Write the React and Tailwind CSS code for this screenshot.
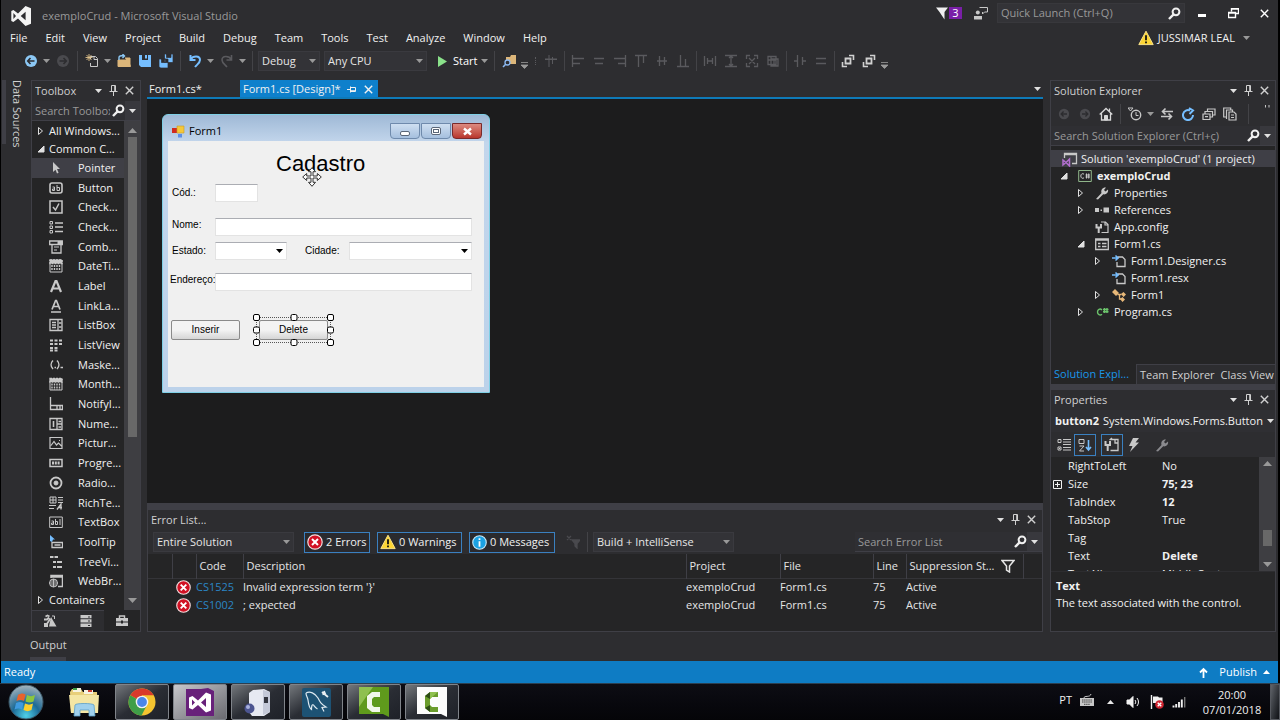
import React from 'react';

/* ---------- shared bits ---------- */

const Icon = ({ size = 14, box = 14, children, className = '' }) => (
    <svg width={size} height={size} viewBox={`0 0 ${box} ${box}`} fill="none" stroke="currentColor" className={`shrink-0 ${className}`} aria-hidden="true">
        {children}
    </svg>
);

const Caret = ({ className = 'text-[#999999]' }) => (
    <svg width="7" height="4" viewBox="0 0 7 4" className={`shrink-0 ${className}`} aria-hidden="true">
        <path d="M0 0h7L3.5 4z" fill="currentColor" />
    </svg>
);

const CaretUp = ({ className = 'text-[#999999]' }) => (
    <svg width="9" height="5" viewBox="0 0 9 5" className={`shrink-0 ${className}`} aria-hidden="true">
        <path d="M0 5h9L4.5 0z" fill="currentColor" />
    </svg>
);

const CaretDown = () => (
    <svg width="9" height="5" viewBox="0 0 9 5" className="shrink-0 text-[#999999]" aria-hidden="true">
        <path d="M0 0h9L4.5 5z" fill="currentColor" />
    </svg>
);

const PinIcon = () => (
    <Icon size={11} box={11}>
        <path d="M3.5 6V.5h4V6M6.7 1v5M1.5 6.5h8M5.5 7v4" />
    </Icon>
);

const CloseIcon = () => (
    <Icon size={9} box={9}>
        <path d="M.8.8l7.4 7.4M8.2.8L.8 8.2" strokeWidth="1.4" />
    </Icon>
);

const SearchIcon = () => (
    <Icon size={13} box={13}>
        <circle cx="8" cy="4.8" r="3.4" strokeWidth="2" />
        <path d="M5.6 7.4L1 12" strokeWidth="2.4" />
    </Icon>
);

const ErrorBadge = ({ size = 15 }) => (
    <Icon size={size} box={16}>
        <circle cx="8" cy="8" r="7.2" fill="#d11124" stroke="#f3dede" strokeWidth="1.2" />
        <path d="M5 5l6 6M11 5l-6 6" stroke="#fff" strokeWidth="2" />
    </Icon>
);

const WarningBadge = () => (
    <Icon size={16} box={16}>
        <path d="M8 1.2L15.2 14.6H.8z" fill="#fcd535" stroke="#f7e08a" strokeLinejoin="round" />
        <path d="M8 5.2v5M8 11.4v1.8" stroke="#111" strokeWidth="1.8" />
    </Icon>
);

const InfoBadge = () => (
    <Icon size={15} box={16}>
        <circle cx="8" cy="8" r="7.2" fill="#1ba1e2" stroke="#c9e8f7" strokeWidth="1.2" />
        <path d="M8 3.4v2M8 6.6v6" stroke="#fff" strokeWidth="1.9" />
    </Icon>
);

const PanelHeader = ({ title }) => (
    <div className="flex h-5 shrink-0 items-center gap-1.5 pb-px pl-[3px] pr-1.5 text-[#d0d0d0]">
        <h2 className="min-w-0 flex-1 truncate">{title}</h2>
        <button aria-label={`${title} window position`}><Caret className="text-[#e0e0e0]" /></button>
        <button aria-label={`${title} auto hide`}><PinIcon /></button>
        <button aria-label={`${title} close`}><CloseIcon /></button>
    </div>
);

const SearchBox = ({ label }) => (
    <div className="flex h-5 shrink-0 items-center border-b border-[#3f3f46] bg-[#2f2f33]">
        <input aria-label={label} placeholder={label} className="w-0 min-w-0 flex-1 bg-transparent pl-[3px] text-[#999999] outline-none placeholder:text-[#999999]" />
        <button aria-label={label} className="pl-0.5 text-[#f0f0f0]"><SearchIcon /></button>
        <button aria-label={`${label} options`} className="flex h-full items-center bg-[#38383d] px-1"><Caret className="text-[#e0e0e0]" /></button>
    </div>
);

const Combo = ({ label, value, className }) => (
    <div className={`relative flex h-5 shrink-0 items-center ${className}`}>
        <select aria-label={label} className="h-full w-full appearance-none border border-[#3a3a3f] bg-[#333337] pl-[3px] pr-3 text-[#e6e6e6] outline-none">
            <option>{value}</option>
        </select>
        <Caret className="pointer-events-none absolute right-1 text-[#999999]" />
    </div>
);

/* ---------- title, menu and toolbar ---------- */

const VsLogo = () => (
    <svg width="20" height="20" viewBox="0 0 20 20" className="mt-1.5 shrink-0" aria-hidden="true">
        <path d="M14.5 0L20 2.2v15.6L14.5 20 7 12.4 2.4 16 .3 15V5l2.1-1L7 7.6zM14.6 5.8L9.7 10l4.9 4.2zM2.4 7v6L5 10z" fill="#f4f4f4" fillRule="evenodd" />
    </svg>
);

const TitleBar = () => (
    <header className="flex h-7 items-center pb-0.5 pl-[10px] pr-[9px]">
        <VsLogo />
        <h1 className="ml-[11px] flex-1 pt-1.5 text-[#999999]">exemploCrud - Microsoft Visual Studio</h1>
        <button aria-label="Notifications" className="flex items-center text-[#f0f0f0]">
            <Icon size={13} box={13}><path d="M0 .5h12L8.5 5v7.5L3.5 5z" fill="currentColor" stroke="none" /></Icon>
            <span className="flex h-3 w-[13px] items-center justify-center bg-[#7a1fa8] text-white">3</span>
        </button>
        <button aria-label="Feedback" className="ml-3 text-[#c8c8c8]">
            <Icon>
                <path d="M5.5 1.5h8v4.5h-3l-2 2V6" />
                <circle cx="3.8" cy="6.5" r="2" fill="currentColor" stroke="none" />
                <path d="M0 10h8v3.5H0z" fill="currentColor" stroke="none" />
            </Icon>
        </button>
        <div className="ml-[9px] flex h-5 w-[188px] items-center border border-[#38383c] bg-[#333337]">
            <input aria-label="Quick Launch" placeholder="Quick Launch (Ctrl+Q)" className="w-0 flex-1 bg-transparent pl-[3px] outline-none placeholder:text-[#999999]" />
            <button aria-label="Launch" className="pr-[3px] text-[#f0f0f0]"><SearchIcon /></button>
        </div>
        <button aria-label="Minimize" className="ml-3 text-white"><Icon size={10} box={10}><path d="M1 7.5h8" strokeWidth="3" /></Icon></button>
        <button aria-label="Restore" className="ml-[21px] text-white">
            <Icon size={11} box={11}><path d="M3.5 3.5v-3h7v5h-3M.5 4.5h7v5h-7zM.5 5h7M3.5 1h7" strokeWidth="1.4" /></Icon>
        </button>
        <button aria-label="Close" className="ml-[21px] text-white"><CloseIcon /></button>
    </header>
);

const menus = ['File', 'Edit', 'View', 'Project', 'Build', 'Debug', 'Team', 'Tools', 'Test', 'Analyze', 'Window', 'Help'];

const MenuBar = () => (
    <nav className="flex h-5 items-center pl-[9px] pr-7 text-[#f1f1f1]">
        {menus.map((m) => (
            <a key={m} href={`#${m}`} className="mr-[18px]">{m}</a>
        ))}
        <button className="ml-auto flex items-center gap-1">
            <WarningBadge />
            <span className="mr-1">JUSSIMAR LEAL</span>
            <Caret />
        </button>
    </nav>
);

const Tool = ({ label, children, className = 'text-[#5a5a5e]' }) => (
    <button aria-label={label} className={`flex w-[21px] shrink-0 items-center justify-center ${className}`}>{children}</button>
);

const Drop = ({ label, children }) => (
    <button aria-label={label} className="flex w-[11px] shrink-0 items-center justify-center">{children || <Caret />}</button>
);

const Sep = ({ className = 'w-2' }) => (
    <span className={`flex h-5 shrink-0 justify-center ${className}`}><span className="h-full w-px bg-[#434347]" /></span>
);

const Overflow = () => (
    <svg width="7" height="7" viewBox="0 0 7 7" className="mt-2" aria-hidden="true">
        <path d="M0 .5h7M0 3h7L3.5 6.500z" stroke="#999" strokeWidth=".8" fill="#999" />
    </svg>
);

const layoutTools = [
    [
        ['Align lefts', 'M1.500 1v12M2 4.500h11M2 9.500h7'],
        ['Align centers', 'M2 4.500h10M3 9.500h8'],
        ['Align rights', 'M12.500 1v12M1 4.500h11M5 9.500h7'],
        ['Align tops', 'M1 1.500h12M4.500 2v11M9.500 2v7'],
        ['Align middles', 'M4.500 2v10M9.500 3v8M2 7h10'],
        ['Align bottoms', 'M1 12.500h12M4.500 1v11M9.500 5v7'],
    ],
    [
        ['Same width', 'M1.500 2v10M12.500 2v10M4.500 4v6M9.500 4v6M5 7h4'],
        ['Same height', 'M1 1.500h12M1 12.500h12M7 2v10M5 4l2-2 2 2M5 10l2 2 2-2'],
        ['Same size', 'M1.500 5V1.500H5M9 1.500h3.500V5M12.500 9v3.500H9M5 12.500H1.500V9M4 4l6 6M10 4l-6 6'],
        ['Size to grid', 'M2 2.500h8v8H2zM5 5h7v7H5zM5 2v8M2 6h8M8 5v7'],
    ],
    [
        ['Horizontal spacing', 'M4.500 1v12M9.500 3v8M1 7h3M10 7h3'],
        ['Vertical spacing', 'M2 4.500h10M2 9.500h10'],
    ],
];

const Toolbar = () => (
    <div className="flex h-[26px] items-center pl-[19px]">
        <Tool label="Navigate backward">
            <Icon><circle cx="7" cy="7" r="6" fill="#8cc8f5" stroke="none" /><path d="M10.500 7H4M6.500 4L3.700 7l2.800 3" stroke="#2d2d30" strokeWidth="1.600" /></Icon>
        </Tool>
        <Drop label="Backward history" />
        <Tool label="Navigate forward">
            <Icon><circle cx="7" cy="7" r="6" fill="#4a4a4e" stroke="none" /><path d="M3.500 7H10M7.500 4l2.800 3-2.800 3" stroke="#2d2d30" strokeWidth="1.600" /></Icon>
        </Tool>
        <Sep />
        <Tool label="New project" className="text-[#c8c8c8]">
            <Icon><path d="M5.500 5V2.500h5l2 2v8h-7V9M9 2.500v3h3.500" /><path d="M4 0v7M.5 3.500h7M1.500 1l5 5M6.500 1l-5 5" stroke="#e0c28a" strokeWidth=".9" /></Icon>
        </Tool>
        <Drop label="New options" />
        <Tool label="Open file">
            <Icon><path d="M1 6h10l2.500 6.500H1zM8 4h5v8" fill="#dcb67a" stroke="#dcb67a" /><path d="M2 6V3.500C2 2 3.500 1.500 7 2M5.500 0L7.500 2 5.500 4" stroke="#8cc8f5" strokeWidth="1.400" /></Icon>
        </Tool>
        <Tool label="Save"><Icon><path d="M1 1h12v12H3L1 11zM4 1v5h6V1zM7 1h2v3.500H7z" fill="#75beff" fillRule="evenodd" stroke="none" /></Icon></Tool>
        <Tool label="Save all">
            <Icon><path d="M5.500 0H14v8.500H5.500zM7.500 0v3.500H12V0zM0 5h9v9H1.500L0 12.500zM2.500 5v3.500h4V5z" fill="#75beff" fillRule="evenodd" stroke="#2d2d30" strokeWidth=".7" /></Icon>
        </Tool>
        <Sep />
        <Tool label="Undo" className="text-[#75beff]"><Icon><path d="M2.500 1v5h5M2.700 5.500C5 1.500 12 1.500 12 6c0 3-3 4.500-5 7" strokeWidth="2" /></Icon></Tool>
        <Drop label="Undo history" />
        <Tool label="Redo"><Icon><path d="M11.500 1v5h-5M11.300 5.500C9 1.500 2 1.500 2 6c0 3 3 4.500 5 7" strokeWidth="1.600" /></Icon></Tool>
        <Drop label="Redo history" />
        <Sep />
        <Combo label="Solution configuration" value="Debug" className="ml-0.5 w-[62px]" />
        <Combo label="Solution platform" value="Any CPU" className="ml-1 w-[103px]" />
        <button className="ml-[11px] flex w-[41px] items-center gap-1.5 text-white">
            <svg width="9" height="11" viewBox="0 0 9 11" className="shrink-0" aria-hidden="true"><path d="M0 0l9 5.500L0 11z" fill="#8ae28a" /></svg>
            <span>Start</span>
        </button>
        <Drop label="Start options" />
        <Sep />
        <Tool label="Find in files">
            <Icon><path d="M4 3h4l1-2h5v9H4z" fill="#dcb67a" stroke="none" /><circle cx="5.500" cy="8.500" r="2.500" stroke="#8cb8f0" strokeWidth="1.300" fill="#2d2d30" /><path d="M3.700 10.300L1 13" stroke="#8cb8f0" strokeWidth="1.600" /></Icon>
        </Tool>
        <Drop label="Toolbar options"><Overflow /></Drop>
        <span className="mr-1 h-2 w-1.5 border-r border-dotted border-[#5a5a5e]" />
        <Tool label="Align to grid"><Icon><path d="M5 1v12M1 5h12M1 5.500h12M8.500 3v7" /></Icon></Tool>
        {layoutTools.map((group, i) => (
            <React.Fragment key={i}>
                <Sep className="w-1.5" />
                {group.map(([label, d]) => (
                    <Tool key={label} label={label}><Icon><path d={d} strokeWidth="1.300" /></Icon></Tool>
                ))}
            </React.Fragment>
        ))}
        <Sep className="w-1.5" />
        {['Bring to front', 'Send to back'].map((label) => (
            <Tool key={label} label={label} className="text-[#d0d0d0]">
                <Icon><path d="M4.500 4.500h5v5h-5z" strokeWidth="1.800" /><path d="M8 1.500h4.500V6M6 12.500H1.500V8" strokeWidth="1.600" /></Icon>
            </Tool>
        ))}
        <Drop label="Layout toolbar options"><Overflow /></Drop>
    </div>
);

/* ---------- toolbox ---------- */

const Arrow = ({ open }) => (
    <Icon size={8} box={8} className="text-[#e0e0e0]">
        {open ? <path d="M7 1v6H1z" fill="currentColor" /> : <path d="M1.500 .5v7L5.500 4z" />}
    </Icon>
);

const toolboxItems = [
    ['Pointer', <path d="M4 1v10l2.500-2.300L8 12.500l1.600-.8L8 8h3z" fill="currentColor" stroke="none" />],
    ['Button', <><rect x="1" y="2" width="12" height="10" rx="2" strokeWidth="1.600" /><path d="M3.500 6h2v3.500h-2V8h2M8 4v5.500h2.500V6.500H8" /></>],
    ['Check...', <><rect x="1" y="1" width="12" height="12" strokeWidth="1.500" /><path d="M4 7l2.500 3L10 3.500" strokeWidth="1.500" /></>],
    ['Check...', <><path d="M1 1.500h2.500V4H1zM1 6h2.500v2.500H1zM1 10.500h2.500V13H1z" /><path d="M6 3h8M6 7h8M6 11.500h8" strokeWidth="1.500" /></>],
    ['Comb...', <><path d="M.7 1h12.600v3.500H.7zM3 4.500V13h9V4.500" strokeWidth="1.300" /><path d="M9 1.500h4v3H9zM5 7h5M5 10h3" fill="currentColor" /></>],
    ['DateTi...', <><path d="M1 1h12v12H1z" /><path d="M1 1h12v3.500H1zM3 6v6M5.500 6v6M8 6v6M10.500 6v6" fill="currentColor" strokeDasharray="2 1" strokeWidth="1.400" /></>],
    ['Label', <path d="M2 13L6.500 2h1L12 13M4 9.500h6" strokeWidth="2.200" />],
    ['LinkLa...', <path d="M3 10.500L6.600 1.500h.8L11 10.500M4.500 7.500h5M2 13h10" strokeWidth="1.700" />],
    ['ListBox', <><path d="M1 1.500h12v11H1zM9 2v10" strokeWidth="1.300" /><path d="M3 4.500h4M3 7h4M3 9.500h4M10 5h2.500M10 9h2.500" strokeWidth="1.300" /></>],
    ['ListView', <path d="M1 2.500h12M1 6h12M1 10h8M1 12.500h8" strokeWidth="2" strokeDasharray="3 1.500" />],
    ['Maske...', <path d="M4 2.500C1.500 5 1.500 8.500 4 11M8 2.500c2.500 2.500 2.500 6 0 8.500M5.500 9.500h1.500M11.500 9.500H14" strokeWidth="1.500" />],
    ['Month...', <><path d="M1 2h12v11H1z" /><path d="M1 1.500h12V5H1zM3 6.500V13M5.500 6.500V13M8 6.500V13M10.500 6.500V13" fill="currentColor" strokeDasharray="2 1" strokeWidth="1.400" /></>],
    ['NotifyI...', <path d="M1.500 0v12.500h12V8.500h-12M8 8.500v4M11 8.500v4" strokeWidth="1.300" />],
    ['Nume...', <><path d="M1 1.500h12v11H1zM8 2v10M8 7h5" strokeWidth="1.300" /><path d="M4.500 4v6M9.500 4.500h2.500M9.500 10h2.500" strokeWidth="1.600" /></>],
    ['Pictur...', <path d="M1 1.500h12v11H1zM2 9.500l3-4 2.500 3.500 2-2 3 3M10 4.500h1" strokeWidth="1.200" />],
    ['Progre...', <><path d="M1 3.500h12v7H1z" strokeWidth="1.500" /><path d="M3 7h8" strokeWidth="3" strokeDasharray="2 .8" /></>],
    ['Radio...', <><circle cx="7" cy="7" r="5.500" strokeWidth="1.800" /><circle cx="7" cy="7" r="2" fill="currentColor" /></>],
    ['RichTe...', <><path d="M1 1h6v6H1zM4 1v6M1 4h6M9 1.500h5M9 4h5M9 6.500h5M0 9.500h7M0 12.500h5" /><path d="M8 13.500l4-5.500v5.500M10 11.500h3" strokeWidth="1.300" /></>],
    ['TextBox', <><path d="M.7 2h12.600v10.500H.7z" /><path d="M2.500 6h2v3.500h-2V8h2M6.500 4v5.500h2V6.500h-2M11 4v6" /></>],
    ['ToolTip', <><path d="M3 7.500h10.500v5H3zM5.500 10h6" strokeWidth="1.300" /><path d="M1 0l5 4.500H4L3 7 1 6z" fill="#75beff" stroke="none" /></>],
    ['TreeVi...', <path d="M1 2h3.500M5.500 2H9M4 7h3M8 7h5M4 12h3M8 12h5" strokeWidth="2" />],
    ['WebBr...', <><path d="M2 4V1.500h11.500v11H9M2 3h11.500" strokeWidth="1.500" /><circle cx="4.500" cy="9" r="4" /><path d="M.5 9h8M4.500 5v8M1.500 7h6M1.500 11h6" strokeWidth=".9" /></>],
];

const Toolbox = () => (
    <aside className="flex w-[110px] shrink-0 flex-col border border-[#3f3f46]">
        <PanelHeader title="Toolbox" />
        <SearchBox label="Search Toolbox" />
        <div className="flex min-h-0 flex-1 bg-[#252526] text-[#f1f1f1]">
            <div className="flex min-w-0 flex-1 flex-col whitespace-nowrap pb-px pt-px">
                <button className="flex h-[18px] items-center gap-1 pl-[5px]"><Arrow />All Windows...</button>
                <button className="flex h-[18px] items-center gap-1 pl-[5px]"><Arrow open />Common C...</button>
                <ul className="flex min-h-0 flex-1 flex-col">
                    {toolboxItems.map(([label, art], i) => (
                        <li key={i} className={`flex min-h-0 flex-1 items-center pl-[17px] ${i === 0 ? 'bg-[#3f3f46]' : ''}`}>
                            <Icon className="mr-2 text-[#c8c8c8]">{art}</Icon>
                            <span className="pl-[7px] leading-4">{label}</span>
                        </li>
                    ))}
                </ul>
                <button className="flex h-[18px] items-center gap-1 pl-[5px]"><Arrow />Containers</button>
            </div>
            <div className="flex w-4 shrink-0 flex-col items-center bg-[#3e3e42] py-[7px]">
                <CaretUp />
                <div className="mt-1 w-[9px] flex-[13] bg-[#686868]" />
                <div className="flex-[7]" />
                <CaretDown />
            </div>
        </div>
        <div className="flex h-[21px] shrink-0 text-[#c8c8c8]">
            <button aria-label="Server Explorer" className="flex flex-1 items-center justify-center border-t border-[#3f3f46]">
                <Icon><path d="M2.500 2.500l2-1 2 1M1 5.500h3l2-2M3.500 10.500l4-6" strokeWidth="1.800" /><path d="M8 3l5.500 9.500H6zM1 9h4v4H1z" fill="currentColor" stroke="none" /><path d="M9 2h2.500v3" /></Icon>
            </button>
            <button aria-label="Data Sources" className="flex flex-1 items-center justify-center border-t border-[#3f3f46]">
                <Icon><path d="M1.500 1h11v3.300h-11zM1.500 5.300h11v3.300h-11zM1.500 9.600h11V13h-11z" fill="currentColor" stroke="none" /><path d="M9 3h2M9 7h2M9 11.500h2" stroke="#2d2d30" /></Icon>
            </button>
            <button aria-label="Toolbox tab" className="flex flex-1 items-center justify-center bg-[#252526]">
                <Icon><path d="M1 4h12v3.500H1zM1 8.500h12V12H1z" fill="currentColor" stroke="none" /><path d="M4.500 4V2h5v2" strokeWidth="1.400" /><path d="M7 6.500v3" stroke="#252526" strokeWidth="2" /></Icon>
            </button>
        </div>
    </aside>
);

/* ---------- form designer ---------- */

const field = 'h-[18px] border border-[#e3e3e3] border-t-[#abadb3] bg-white outline-none';
const winButton = 'h-5 w-[69px] rounded-xs border border-[#8a8a8a] bg-linear-to-b from-[#f3f3f3] from-50% to-[#d5d5d5] to-100% text-center';

const FormCombo = ({ id, className }) => (
    <div className={`relative flex items-center ${className}`}>
        <select id={id} className={`w-full appearance-none ${field}`} />
        <Caret className="pointer-events-none absolute right-1 text-black" />
    </div>
);

const handles = [
    '-left-1 -top-1', 'left-1/2 -top-1 -translate-x-1/2', '-right-1 -top-1',
    '-left-1 top-1/2 -translate-y-1/2', '-right-1 top-1/2 -translate-y-1/2',
    '-bottom-1 -left-1', '-bottom-1 left-1/2 -translate-x-1/2', '-bottom-1 -right-1',
];

const FormWindow = () => (
    <div className="w-[328px] rounded-t-md border border-[#7fd0e6] bg-linear-to-b from-[#9fb9d6] via-[#c3d6ec] via-10% to-[#bcd2ea] px-[5px] pb-[5px] text-black">
        <div className="flex h-[26px] items-center pl-1 pr-0.5 pt-1.5">
            <Icon size={13} box={13}>
                <path d="M0 3h5v5H0z" fill="#d02b20" stroke="none" />
                <path d="M5 1h7v7H5z" fill="#f5c83a" stroke="#c99b22" strokeWidth=".6" />
                <path d="M6 9h4v3.500H6z" fill="#5b8fe8" stroke="none" />
            </Icon>
            <span className="ml-1 flex-1">Form1</span>
            <button aria-label="Form minimize" className="flex h-4 w-[30px] items-center justify-center rounded-b-sm border border-[#6f8aac] bg-linear-to-b from-[#cfdff1] to-[#a5bfde]">
                <span className="mt-1 h-[5px] w-[10px] rounded-xs border border-[#5a6678] bg-white" />
            </button>
            <button aria-label="Form maximize" className="ml-px flex h-4 w-[30px] items-center justify-center rounded-b-sm border border-[#6f8aac] bg-linear-to-b from-[#cfdff1] to-[#a5bfde]">
                <span className="flex h-2 w-[10px] items-center justify-center rounded-xs border border-[#5a6678] bg-white"><span className="h-1 w-1.5 border border-[#5a6678]" /></span>
            </button>
            <button aria-label="Form close" className="ml-px flex h-4 w-[30px] items-center justify-center rounded-b-sm border border-[#7a2a2a] bg-linear-to-b from-[#dc8a80] to-[#b8342c]">
                <Icon size={9} box={9}><path d="M1 1.500l7 6M8 1.500l-7 6" stroke="#fff" strokeWidth="2.400" /></Icon>
            </button>
        </div>
        <form className="min-h-[246px] bg-[#f0f0f0] font-['Liberation_Sans',Arial,sans-serif] text-[10px] leading-[14px]">
            <div className="relative w-fit pl-[108px] pt-2">
                <h3 className="text-[22px] leading-[30px]">Cadastro</h3>
                <svg width="20" height="20" viewBox="0 0 20 20" className="absolute -bottom-2 left-[134px]" aria-hidden="true">
                    <path d="M10 .7l3.500 4H11v4.300h4.300V6.500l4 3.500-4 3.500V11H11v4.300h2.500l-3.500 4-3.500-4H9V11H4.700v2.500L.7 10l4-3.500V9H9V4.700H6.500z" fill="#fff" stroke="#333" />
                </svg>
            </div>
            <div className="mt-[5px] flex items-center">
                <label htmlFor="cod" className="w-[47px] pl-1">Cód.:</label>
                <input id="cod" className={`w-[43px] ${field}`} />
            </div>
            <div className="mr-3 mt-4 flex items-start">
                <label htmlFor="nome" className="w-[47px] pl-1">Nome:</label>
                <input id="nome" className={`min-w-0 flex-1 ${field}`} />
            </div>
            <div className="mr-3 mt-1.5 flex items-center">
                <label htmlFor="estado" className="w-[47px] pl-1">Estado:</label>
                <FormCombo id="estado" className="w-[72px]" />
                <label htmlFor="cidade" className="ml-[18px] w-11">Cidade:</label>
                <FormCombo id="cidade" className="min-w-0 flex-1" />
            </div>
            <div className="mr-3 mt-[13px] flex items-start">
                <label htmlFor="endereco" className="w-[47px] pl-0.5">Endereço:</label>
                <input id="endereco" className={`min-w-0 flex-1 ${field}`} />
            </div>
            <div className="mt-[29px] flex gap-[19px] pl-[3px]">
                <button type="button" className={winButton}>Inserir</button>
                <div className="relative">
                    <button type="button" className={`block ${winButton}`}>Delete</button>
                    <div className="pointer-events-none absolute -inset-[3px] border border-dotted border-[#555555]">
                        {handles.map((pos) => (
                            <span key={pos} className={`absolute size-[7px] rounded-xs border border-black bg-white ${pos}`} />
                        ))}
                    </div>
                </div>
            </div>
        </form>
    </div>
);

const Editor = () => (
    <section className="flex min-h-0 flex-1 flex-col">
        <div className="flex h-[19px] shrink-0 items-stretch border-b-2 border-[#0e7ab8] text-[#f1f1f1]">
            <a href="#form1" className="flex w-[93px] items-center pl-0.5 pt-px">Form1.cs*</a>
            <div className="flex w-[138px] items-center bg-[#0e80cc] pl-[3px] pr-[5px] pt-px">
                <a href="#design" className="flex-1 whitespace-nowrap">Form1.cs [Design]*</a>
                <button aria-label="Keep open" className="mr-2"><Icon size={9} box={9}><path d="M0 4.500h3M3.500 1.500v6M4 2.500h4.500v4H4M4 5.700h4" /></Icon></button>
                <button aria-label="Close document"><CloseIcon /></button>
            </div>
            <button aria-label="Active files" className="ml-auto mr-0.5"><Caret className="text-[#e0e0e0]" /></button>
        </div>
        <div className="flex-1 bg-[#1c1c1d] pl-[15px] pt-[15px]">
            <FormWindow />
        </div>
    </section>
);

/* ---------- error list ---------- */

const errors = [
    { code: 'CS1525', text: "Invalid expression term '}'", project: 'exemploCrud', file: 'Form1.cs', line: 75, state: 'Active' },
    { code: 'CS1002', text: '; expected', project: 'exemploCrud', file: 'Form1.cs', line: 75, state: 'Active' },
];

const filterButton = 'flex h-[21px] items-center gap-[3px] whitespace-nowrap border border-[#3a80c0] bg-[#2a2a2e] pl-0.5 text-[#f1f1f1]';
const th = 'border-l border-[#3f3f46] pl-[3px] text-left font-normal';

const ErrorList = () => (
    <section className="flex h-[122px] shrink-0 flex-col border border-t-0 border-[#3f3f46]">
        <PanelHeader title="Error List..." />
        <div className="flex h-6 shrink-0 items-center">
            <Combo label="Error scope" value="Entire Solution" className="ml-[5px] w-[141px]" />
            <button className={`ml-2.5 w-[66px] ${filterButton}`}><ErrorBadge size={16} />2 Errors</button>
            <button className={`ml-[7px] w-[85px] ${filterButton}`}><WarningBadge />0 Warnings</button>
            <button className={`ml-[7px] w-[86px] ${filterButton}`}><InfoBadge />0 Messages</button>
            <Tool label="Clear filters" className="ml-[7px] text-[#4a4a4e]"><Icon><path d="M6 5h8l-3 3.500V13L9 11V8.500zM1 1l4 4M5 1L1 5" fill="currentColor" strokeWidth="1.300" /></Icon></Tool>
            <Sep />
            <Combo label="Error source" value="Build + IntelliSense" className="ml-0.5 w-[141px]" />
            <div className="ml-auto w-[187px]"><SearchBox label="Search Error List" /></div>
        </div>
        <div className="flex-1 bg-[#252526]">
            <table className="w-full table-fixed text-[#e6e6e6]">
                <colgroup>
                    <col className="w-[24px]" /><col className="w-6" /><col className="w-[47px]" /><col />
                    <col className="w-[94px]" /><col className="w-[93px]" /><col className="w-[33px]" /><col className="w-[117px]" /><col className="w-[19px]" />
                </colgroup>
                <thead>
                    <tr className="h-6 border-b border-[#343438]">
                        <td />
                        <td className="border-l border-[#3f3f46]" />
                        <th className={th}>Code</th>
                        <th className={th}>Description</th>
                        <th className={th}>Project</th>
                        <th className={th}>File</th>
                        <th className={th}>Line</th>
                        <th className={th}>
                            <span className="flex items-center justify-between pr-2">
                                Suppression St...
                                <Icon><path d="M1 1.500h12L8.500 7v6l-3-2V7z" strokeWidth="1.500" /></Icon>
                            </span>
                        </th>
                        <td className="border-l border-[#3f3f46]" />
                    </tr>
                </thead>
                <tbody>
                    {errors.map((e) => (
                        <tr key={e.code} className="h-[18px]">
                            <td />
                            <td className="pl-1"><ErrorBadge /></td>
                            <td><a href={`#${e.code}`} className="text-[#2b86c5]">{e.code}</a></td>
                            <td>{e.text}</td>
                            <td>{e.project}</td>
                            <td>{e.file}</td>
                            <td>{e.line}</td>
                            <td>{e.state}</td>
                            <td />
                        </tr>
                    ))}
                </tbody>
            </table>
        </div>
    </section>
);

/* ---------- solution explorer ---------- */

const csFile = (
    <>
        <path d="M6 4.500V3h4.500L13 5.500v7H5V8" strokeWidth="1.300" />
        <path d="M0 4h6M3.500 1.500L6 4 3.500 6.500" stroke="#75beff" strokeWidth="1.500" />
    </>
);

const tree = [
    { text: 'exemploCrud', pad: 'pl-[9px]', open: true, bold: true, art: <><path d="M.7 1.500h12.600v11H.7z" stroke="#8fb58a" /><path d="M6 5.200C4.500 4 2.800 5 2.800 7S4.500 10 6 8.800M8.500 4.500v5M10.700 4.500v5M7.500 6h4.500M7.500 8h4.500" /></> },
    { text: 'Properties', pad: 'pl-[26px]', open: false, art: <path d="M1 13l5.500-6C5.500 3.500 8 1 11 1.500L9 4l1.500 1.500L13 3.500c.7 3-2 5.500-4.800 4.800L3 13.500z" fill="currentColor" stroke="none" /> },
    { text: 'References', pad: 'pl-[26px]', open: false, art: <path d="M0 5h4v4H0zM5.500 6.500h1.500v1.500H5.500zM8.500 4.500H14v5H8.500z" fill="currentColor" stroke="none" /> },
    { text: 'App.config', pad: 'pl-[26px]', art: <><path d="M6 2h4.500L13 4.500v8H6.500M10 2v3h3" strokeWidth="1.200" /><path d="M1.500 4v3.500h4.500V4M3.700 7v6" strokeWidth="2" /></> },
    { text: 'Form1.cs', pad: 'pl-[26px]', open: true, art: <><path d="M.7 2h12.600v10.500H.7zM1 3h12" strokeWidth="1.300" /><path d="M3 6.500h2.500M7 6.500h4.500M3 9.500h2.500M7 9.500h4.500" strokeWidth="1.500" /></> },
    { text: 'Form1.Designer.cs', pad: 'pl-[43px]', open: false, art: csFile },
    { text: 'Form1.resx', pad: 'pl-[43px]', art: csFile },
    { text: 'Form1', pad: 'pl-[43px]', open: false, art: <><path d="M0 4l3-3 4 4-3 3zM9 6l2.500-2L14 6.500 11.500 9zM8 11l2.500-2 2.500 2.500L10.500 14z" fill="#e8b878" stroke="none" /><path d="M5.500 6.500h4M7.500 6.500V11H9" stroke="#e8b878" strokeWidth="1.300" /></> },
    { text: 'Program.cs', pad: 'pl-[26px]', open: false, art: <path d="M7 5C5 3 2.500 4.500 2.500 7S5 11 7 9.200M9.500 3v5M12 3v5M8 4.500h5.500M8 6.700h5.500" stroke="#6cc46c" strokeWidth="1.400" /> },
];

const SolutionExplorer = () => (
    <section className="flex min-h-0 flex-1 flex-col border border-b-0 border-[#3f3f46]">
        <PanelHeader title="Solution Explorer" />
        <div className="flex h-[25px] shrink-0 items-center pl-0.5 text-[#c8c8c8]">
            <Tool label="Back"><Icon size={12}><circle cx="7" cy="7" r="6" fill="#4a4a4e" stroke="none" /><path d="M10.500 7H4M6.500 4L3.700 7l2.800 3" stroke="#2d2d30" strokeWidth="1.600" /></Icon></Tool>
            <Tool label="Forward"><Icon size={12}><circle cx="7" cy="7" r="6" fill="#4a4a4e" stroke="none" /><path d="M3.500 7H10M7.500 4l2.800 3-2.800 3" stroke="#2d2d30" strokeWidth="1.600" /></Icon></Tool>
            <Tool label="Home" className="text-[#d8d8d8]"><Icon><path d="M.7 7.500L7 1.500l6.300 6M2.500 6.500v6.500h9V6.500M10.500 4V1.500" strokeWidth="1.300" /><path d="M5.500 8.500h3V13h-3z" fill="currentColor" /></Icon></Tool>
            <Sep />
            <Tool label="Pending changes filter" className="text-[#c8c8c8]"><Icon><circle cx="8" cy="8" r="4.700" strokeWidth="1.400" /><path d="M8 5v3.500h2.500M0 1h5L2.500 4z" /></Icon></Tool>
            <Drop label="Filter options" />
            <Tool label="Sync with active document" className="text-[#c8c8c8]"><Icon><path d="M13 4.500H2.500M5.500 1.500l-3 3 3 3M1 9.500h10.500M8.500 6.500l3 3-3 3" strokeWidth="1.600" /></Icon></Tool>
            <Tool label="Refresh" className="text-[#75beff]"><Icon><path d="M9 3.500A5 5 0 1 0 12 8M8 1l4 2.500L8.500 7" strokeWidth="2" /></Icon></Tool>
            <Tool label="Collapse all" className="text-[#c8c8c8]"><Icon><path d="M1 7h7v5.500H1zM3 7V4.500h7.500V10H8M5.500 4.500V2H13v6h-2.500M3 9.700h3" strokeWidth="1.200" /></Icon></Tool>
            <Tool label="Show all files" className="text-[#c8c8c8]"><Icon><path d="M3 10H.7V1h7v1.500M3.500 12V3h6v1.500M6 5h5l2 2v6H6zM8 8h3M8 10.500h3" strokeWidth="1.200" /></Icon></Tool>
            <Sep className="ml-1 w-2" />
            <Icon size={7} box={7} className="mb-3 ml-auto mr-1"><path d="M1.500 1v2.500M5 1v2.500" /></Icon>
        </div>
        <SearchBox label="Search Solution Explorer (Ctrl+ç)" />
        <ul className="min-h-0 flex-1 bg-[#252526] pt-1 text-[#f1f1f1]">
            <li className="flex h-[17px] items-center gap-[3px] bg-[#3f3f46] pl-[11px]">
                <Icon size={16} box={16}>
                    <path d="M2.500 7V2.500h12v10H10M2.500 3.500h12" stroke="#c8c8c8" strokeWidth="1.300" />
                    <path d="M1 9v5l3-2.500L7.500 15V8L4 11.500z" stroke="#b36fd0" strokeWidth="1.500" />
                </Icon>
                Solution 'exemploCrud' (1 project)
            </li>
            {tree.map((n) => (
                <li key={n.text} className={`flex h-[17px] items-center ${n.pad} ${n.bold ? 'font-bold' : ''}`}>
                    <span className="flex w-[18px]">{n.open !== undefined && <Arrow open={n.open} />}</span>
                    <Icon className="mr-[5px] text-[#c8c8c8]">{n.art}</Icon>
                    {n.text}
                </li>
            ))}
        </ul>
        <div className="flex h-5 shrink-0 items-stretch whitespace-nowrap">
            <a href="#solution" className="flex w-[85px] items-center bg-[#252526] pl-[3px] text-[#1a97ea]">Solution Expl...</a>
            <a href="#team" className="flex items-center border-l border-t border-[#3f3f46] px-[3px] text-[#d0d0d0]">Team Explorer</a>
            <a href="#class" className="flex flex-1 items-center border-t border-[#3f3f46] pl-[3px] text-[#d0d0d0]">Class View</a>
        </div>
    </section>
);

/* ---------- properties ---------- */

const props = [
    ['RightToLeft', 'No'],
    ['Size', '75; 23', true],
    ['TabIndex', '12', true],
    ['TabStop', 'True'],
    ['Tag', ''],
    ['Text', 'Delete', true],
    ['TextAlign', 'MiddleCenter'],
];

const pressed = 'flex size-[22px] items-center justify-center border border-[#3a80c0]';

const Properties = () => (
    <section className="flex h-[242px] shrink-0 flex-col border border-t-0 border-[#3f3f46]">
        <PanelHeader title="Properties" />
        <button className="flex h-[22px] shrink-0 items-center gap-1 whitespace-nowrap bg-[#2f2f33] pl-1 pr-0.5 text-[#f1f1f1]">
            <b>button2</b>
            <span className="flex-1 text-left">System.Windows.Forms.Button</span>
            <Caret className="text-[#e0e0e0]" />
        </button>
        <div className="flex h-[25px] shrink-0 items-center pl-0.5 text-[#c8c8c8]">
            <Tool label="Categorized" className="text-[#c8c8c8]"><Icon><path d="M1 1.500h3v3H1zM1 9h3v3H1zM2.500 10v1M6 1.500h8M6 4h8M6 6.500h8M6 9.500h8M6 12h8" /></Icon></Tool>
            <button aria-label="Alphabetical" className={pressed}>
                <Icon><path d="M1 1.500h5v4H1zM1.500 8h4.500l-4.500 5H6" /><path d="M10.500 2v10M8 9l2.500 3L13 9" stroke="#75beff" strokeWidth="1.600" /></Icon>
            </button>
            <button aria-label="Properties page" className={`ml-[5px] ${pressed}`}>
                <Icon size={16} box={16}><path d="M6 2.500h8v11H6.500M11 2.500v3.500h3.500M8 1L5.500 3" strokeWidth="1.300" /><path d="M1.500 4v4h4.500V4M3.700 8v6" strokeWidth="2" /></Icon>
            </button>
            <Tool label="Events" className="text-[#c8c8c8]"><Icon><path d="M6 0h6L8.500 4.500H12L3 14l2.500-6H2z" fill="currentColor" stroke="none" /></Icon></Tool>
            <Tool label="Property pages" className="ml-[7px] text-[#8a8a8e]"><Icon><path d="M1 13l5.500-6C5.500 3.500 8 1 11 1.500L9 4l1.500 1.500L13 3.500c.7 3-2 5.500-4.800 4.800L3 13.500z" fill="currentColor" stroke="none" /></Icon></Tool>
        </div>
        <div className="flex h-[114px] shrink-0 bg-[#252526] text-[#f1f1f1]">
            <div className="min-w-0 flex-1 overflow-hidden">
                <table className="w-full table-fixed">
                    <colgroup><col className="w-[17px]" /><col className="w-[94px]" /><col /></colgroup>
                    <tbody>
                        {props.map(([name, value, bold]) => (
                            <tr key={name} className="h-[18px]">
                                <td className="pl-0.5">{name === 'Size' && <Icon size={9} box={9}><path d="M.5.500h8v8h-8zM2 4.500h5M4.500 2v5" /></Icon>}</td>
                                <td>{name}</td>
                                <td className={bold ? 'font-bold' : ''}>{value}</td>
                            </tr>
                        ))}
                    </tbody>
                </table>
            </div>
            <div className="flex w-4 shrink-0 flex-col items-center bg-[#3e3e42] py-1">
                <CaretUp />
                <div className="flex-1" />
                <div className="mb-4 h-4 w-[9px] bg-[#686868]" />
                <CaretDown />
            </div>
        </div>
        <div className="flex-1 border-t border-[#2d2d30] bg-[#252526] pl-[5px] pt-[5px] leading-[17px] text-[#f1f1f1]">
            <b className="block">Text</b>
            <p>The text associated with the control.</p>
        </div>
    </section>
);

/* ---------- windows taskbar ---------- */

const apps = [
    ['Google Chrome', (
        <svg width="28" height="28" viewBox="0 0 28 28" aria-hidden="true">
            <circle cx="14" cy="14" r="13.500" fill="#f4c430" />
            <path d="M14 14L2.300 7.200A13.500 13.500 0 0 1 25.700 7.200H14z" fill="#d9392b" />
            <path d="M14 14L2.300 7.200A13.500 13.500 0 0 0 13.500 27.500L19 17z" fill="#3f9e48" />
            <circle cx="14" cy="14" r="6.300" fill="#f3f3f3" />
            <circle cx="14" cy="14" r="4.900" fill="#4a86e8" />
        </svg>
    )],
    ['Visual Studio', (
        <svg width="28" height="28" viewBox="0 0 28 28" aria-hidden="true">
            <path d="M0 1h15l7-1 6 3v25H0z" fill="#68217a" />
            <path d="M20 4.500l5 2v16l-5 2-8-7.500-5.500 4.500L3 20V9.500L6.500 8l5.500 4.500zM20 10l-5 4.500 5 4.500zM6 11.500v6L9 14.500z" fill="#fff" fillRule="evenodd" />
        </svg>
    )],
    ['SQL Server', (
        <svg width="28" height="28" viewBox="0 0 28 28" aria-hidden="true">
            <path d="M5 5l4-3 11-1 6 3v20l-6 4H8l-3-4z" fill="#e6e9f2" />
            <path d="M19 2l7 2v20l-7 3z" fill="#c4c9d8" />
            <path d="M20 9h4v6h-4z" fill="#33363f" />
            <circle cx="5.500" cy="20.500" r="5" fill="#4c5590" /><circle cx="4" cy="19" r="2" fill="#a8b0dc" />
        </svg>
    )],
    ['MySQL Workbench', (
        <svg width="29" height="29" viewBox="0 0 29 29" aria-hidden="true">
            <rect width="29" height="29" rx="2" fill="#1d5274" />
            <path d="M4 5c4-2 9 0 12 5 2 4 3 6 8 9l-4 .5 2 4M4 5c0 3 1.500 4 2 7 .5 4 1 8 3.500 9.500C9.500 18 10 16 11.500 17c1.500 2 2 3 4 4" fill="none" stroke="#dce8f0" strokeWidth="1.200" />
            <path d="M20 4l6 5M22 3l1 2.500-2.500 1" fill="none" stroke="#e8eef2" strokeWidth="1.800" />
        </svg>
    )],
    ['Camtasia', (
        <svg width="30" height="30" viewBox="0 0 30 30" aria-hidden="true">
            <path d="M0 0h30v30l-6-3H0z" fill="#5f9a1c" /><path d="M0 0h14L0 20z" fill="#8fc050" />
            <path d="M21 5v5h-6l-2 2v6l2 2h6v5h-8l-5-4V9l5-4z" fill="#f2f7ea" />
        </svg>
    )],
    ['Camtasia Recorder', (
        <svg width="30" height="30" viewBox="0 0 30 30" aria-hidden="true">
            <path d="M0 0h30v30l-6-3H0z" fill="#fcfcfc" />
            <path d="M21 5v5h-6l-2 2v6l2 2h6v5h-8l-5-4V9l5-4z" fill="#6a9c2c" />
            <path d="M13 5v7l-5-3zM13 18v7l-5-4z" fill="#2c4c14" /><path d="M13 5h8l-6 5-2 2z" fill="#8fc050" />
        </svg>
    )],
];

const Taskbar = () => (
    <footer className="flex h-[37px] shrink-0 items-center border-t border-[#2c3f50] bg-linear-to-b from-[#0d0d14] to-[#050508] text-[#f1f1f1]">
        <button aria-label="Start menu" className="ml-2 shrink-0">
            <svg width="36" height="36" viewBox="0 0 36 36" aria-hidden="true">
                <defs>
                    <radialGradient id="orb" cx=".5" cy=".9" r=".9"><stop offset="0" stopColor="#4fd0e8" /><stop offset=".45" stopColor="#1c6a96" /><stop offset="1" stopColor="#a8b4bc" /></radialGradient>
                </defs>
                <circle cx="18" cy="18" r="17" fill="url(#orb)" stroke="#3a5565" />
                <path d="M10 11c3-2 5-2 7.500-.5L16 17c-2.500-1.500-5-1.500-7.500 0z" fill="#e8632c" />
                <path d="M19 11c3 1.500 5 1.500 8 0l-1.500 6.500c-3 1.500-5 1-8 0z" fill="#8cc63f" />
                <path d="M8 19c3-1.500 5-1.500 7.500 0L14 25.500c-2.500-1.500-4.500-1.500-7.500 0z" fill="#3f9be0" />
                <path d="M17 19.500c3 1.500 5 1.500 8 0L23.500 26c-3 1.500-5 1.500-8 0z" fill="#fcd02c" />
            </svg>
        </button>
        <button aria-label="Windows Explorer" className="ml-6 mr-[15px] shrink-0">
            <svg width="32" height="30" viewBox="0 0 32 30" aria-hidden="true">
                <path d="M2 5l2-3h9l2 3h14l1 21H3z" fill="#e8cf7a" /><path d="M5 1h8v4H5zM16 3h9v4h-9z" fill="#f7f3e0" /><path d="M5 1h4v2H5z" fill="#3fa048" /><path d="M20 3h4v2h-4z" fill="#d04030" />
                <path d="M1 8h30l-1 18H3z" fill="#f4e6a4" />
                <path d="M6 29l1-11c0-2 18-2 19 0l1 11h-6v-6h-9v6z" fill="#9fd0ec" stroke="#5b9ec8" strokeWidth=".8" />
            </svg>
        </button>
        {apps.map(([label, art]) => (
            <button
                key={label}
                aria-label={label}
                className={`mr-1 flex h-9 w-[54px] shrink-0 items-center justify-center rounded-xs border border-[#80848a] bg-linear-to-br ${label === 'Visual Studio' ? 'from-[#c8c8cc] to-[#6a6a70]' : 'from-[#74787c] via-[#2a2d34] to-[#1e2128]'}`}
            >
                {art}
            </button>
        ))}
        <div className="ml-auto flex h-full items-center">
            <span className="mr-2 pb-1">PT</span>
            <button aria-label="Keyboard" className="mr-[13px] pb-1 text-[#c8c8c8]"><Icon><path d="M0 5h14v8H0z" fill="currentColor" stroke="none" /><path d="M2 7h10M2 9h10M4 11.300h6" stroke="#333" strokeWidth=".9" strokeDasharray="1.500 .6" /><path d="M4 5c0-3 6 0 7-4" /></Icon></button>
            <button aria-label="Show hidden icons" className="mr-3"><svg width="7" height="4" viewBox="0 0 7 4"><path d="M0 4h7L3.500 0z" fill="#e8e8e8" /></svg></button>
            <button aria-label="Volume" className="mr-2.5"><Icon><path d="M1 5h2.500L7 1.500v11L3.500 9H1z" fill="currentColor" /><path d="M9 5c1 1.500 1 2.500 0 4M11 3c2 2.500 2 5.500 0 8" /></Icon></button>
            <button aria-label="Action center" className="mr-2"><Icon><path d="M1.500 0v14" strokeWidth="1.400" /><path d="M3 1.500h5l1 1h3.500V8H3z" fill="currentColor" stroke="none" /><circle cx="9.500" cy="9.500" r="4.300" fill="#d02430" stroke="none" /><path d="M7.700 7.700l3.600 3.600M11.300 7.700l-3.600 3.600" stroke="#fff" strokeWidth="1.300" /></Icon></button>
            <button aria-label="Network" className="mr-3"><Icon><path d="M1.500 10.500v2M4.200 9v3.500M7 7v5.500M9.800 4.500v8" strokeWidth="1.900" /><path d="M12.700 2v10.500" strokeWidth="1.400" stroke="#777" /></Icon></button>
            <p className="w-[68px] text-center leading-[15px]">20:00<br />07/01/2018</p>
            <button aria-label="Show desktop" className="ml-1 h-full w-[10px] border border-[#55585e] bg-linear-to-br from-[#60646a] to-[#101216]" />
        </div>
    </footer>
);

const App = () => (
    <div className="flex min-h-screen flex-col bg-[#2d2d30] font-['Open_Sans','Noto_Sans',sans-serif] text-[11px] leading-4">
        <div className="flex flex-1 flex-col border-l border-r-2 border-black">
            <TitleBar />
            <MenuBar />
            <Toolbar />
            <div className="mt-1.5 flex flex-1 pr-0.5">
                <div className="flex w-[30px] shrink-0 items-start">
                    <span className="ml-px h-16 w-1 bg-[#3f3f46]" />
                    <a href="#data-sources" className="ml-[3px] text-[#d0d0d0] [writing-mode:vertical-rl]">Data Sources</a>
                </div>
                <Toolbox />
                <main className="ml-1.5 flex min-w-0 flex-1 flex-col">
                    <Editor />
                    <div className="h-[7px] shrink-0 bg-[#3f3f46]" />
                    <ErrorList />
                </main>
                <div className="ml-[7px] flex w-[226px] shrink-0 flex-col">
                    <SolutionExplorer />
                    <div className="h-1.5 shrink-0 bg-[#3f3f46]" />
                    <Properties />
                </div>
            </div>
            <div className="flex h-[29px] shrink-0 flex-col items-start justify-between pl-[29px] pt-[5px]">
                <a href="#output" className="text-[#d0d0d0]">Output</a>
                <span className="h-1 w-9 bg-[#3f3f46]" />
            </div>
            <div className="flex h-[22px] shrink-0 items-center bg-[#0e7cc4] pl-[3px] pr-2 text-white">
                <span className="flex-1">Ready</span>
                <button className="flex items-center gap-1.5">
                    <Icon size={11} box={11}><path d="M5.500 11V2M2 5.500L5.500 2 9 5.500" strokeWidth="1.800" /></Icon>
                    <span className="ml-1">Publish</span>
                    <svg width="7" height="4" viewBox="0 0 7 4"><path d="M0 4h7L3.500 0z" fill="#fff" /></svg>
                </button>
            </div>
        </div>
        <Taskbar />
    </div>
);

export default App;
